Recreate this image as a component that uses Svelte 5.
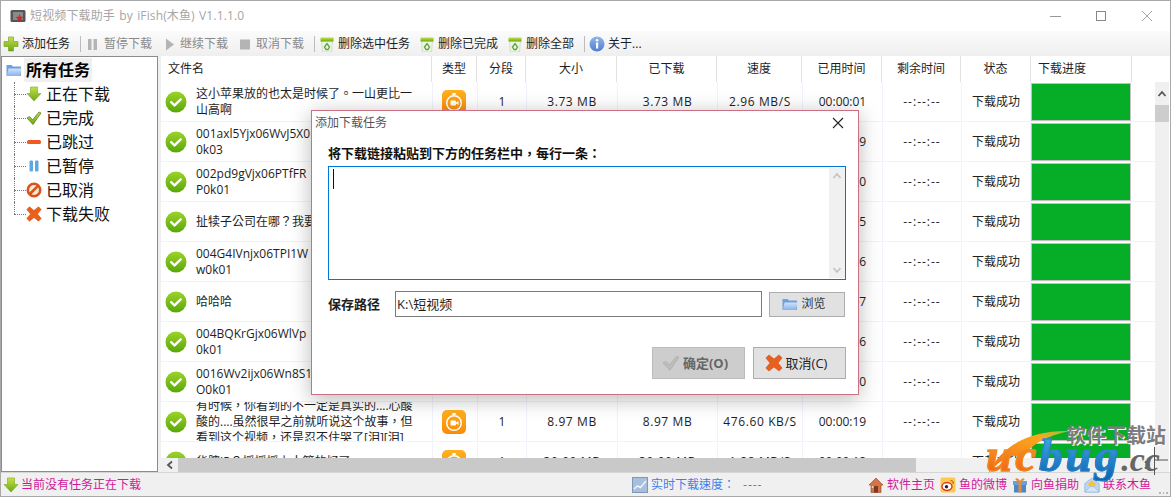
<script>
  const tree = [
    ['down', '正在下载'], ['check', '已完成'], ['dash', '已跳过'],
    ['pause2', '已暂停'], ['ban', '已取消'], ['cross', '下载失败']
  ];
  const heads = ['文件名', '类型', '分段', '大小', '已下载', '速度', '已用时间', '剩余时间', '状态', '下载进度'];
  const rows = [
    ['这小苹果放的也太是时候了。一山更比一山高啊', '3.73 MB', '2.96 MB/S', '00:00:01'],
    ['001axl5Yjx06WvJ5X0\n0k03', '5.12 MB', '580.20 KB/S', '00:00:09'],
    ['002pd9gVjx06PTfFR\nP0k01', '6.40 MB', '640.10 KB/S', '00:00:10'],
    ['扯犊子公司在哪？我要', '3.10 MB', '620.00 KB/S', '00:00:05'],
    ['004G4IVnjx06TPI1W\nw0k01', '4.02 MB', '670.33 KB/S', '00:00:06'],
    ['哈哈哈', '4.55 MB', '650.00 KB/S', '00:00:07'],
    ['004BQKrGjx06WlVp\n0k01', '3.88 MB', '646.66 KB/S', '00:00:06'],
    ['0016Wv2ijx06Wn8S1\nO0k01', '6.21 MB', '621.00 KB/S', '00:00:10'],
    ['有时候，你看到的不一定是真实的....心酸酸的....虽然很早之前就听说这个故事，但看到这个视频，还是忍不住哭了[泪][泪]', '8.97 MB', '476.60 KB/S', '00:00:19'],
    ['华腔IP？摇摇摇上人算的好了', '30.00 MB', '1.28 MB/S', '00:00:12']
  ];
  const links = [['house', '软件主页'], ['weibo', '鱼的微博'], ['gift', '向鱼捐助'], ['mail', '联系木鱼']];
</script>

{#snippet icon(name)}
  <svg class="ico" viewBox="0 0 16 16" width="16" height="16">
    {#if name === 'plus'}
      <path d="M5.5 1h5v4.5H15v5h-4.500V15h-5v-4.500H1v-5h4.500z" fill="url(#gGreen)" stroke="#6c9d12" stroke-width=".6"/>
    {:else if name === 'down'}
      <path d="M4.500 1h7v6.500H15L8 15 1 7.500h3.500z" fill="url(#gGreen)" stroke="#7aa818" stroke-width=".6"/>
    {:else if name === 'check'}
      <path d="M1 8l2.500-1.500L6.500 10 13 2l2 1-8 11.500z" fill="url(#gGreen)" stroke="#4f6b16" stroke-width=".7"/>
    {:else if name === 'dash'}
      <rect x="1" y="6" width="14" height="4" rx="1.500" fill="#ee5a22"/>
    {:else if name === 'pause2'}
      <rect x="3.500" y="2.500" width="3.500" height="11" rx="1" fill="#5aa9e0"/><rect x="9" y="2.500" width="3.500" height="11" rx="1" fill="#5aa9e0"/>
    {:else if name === 'ban'}
      <circle cx="8" cy="8" r="6.200" fill="#fbe8d8" stroke="#d9541a" stroke-width="2.600"/><path d="M3.800 12L12 3.800" stroke="#d9541a" stroke-width="2.600"/>
    {:else if name === 'cross'}
      <path d="M3.500.8L8 4.500 12.500.8l2.700 2.700L11.500 8l3.700 4.500-2.700 2.700L8 11.500l-4.500 3.700-2.700-2.700L4.500 8 .8 3.500z" fill="#e8601c" stroke="#c9480e" stroke-width=".5"/>
    {:else if name === 'folder'}
      <path d="M.5 3h5l1.500 1.500h8V14H.5z" fill="#6f9fdc"/><path d="M2.500 6.500H15.500L14 14H.8z" fill="url(#gBlue)"/>
    {:else if name === 'pauseGray'}
      <rect x="3" y="3" width="3.500" height="11" fill="#b4b4b4"/><rect x="8.500" y="3" width="3.500" height="11" fill="#b4b4b4"/>
    {:else if name === 'playGray'}
      <path d="M5 2.500l8 6-8 6z" fill="#b4b4b4"/>
    {:else if name === 'stopGray'}
      <rect x="3" y="3.500" width="10" height="10" fill="#b4b4b4"/>
    {:else if name === 'trash'}
      <path d="M2.500 5h11l-1 11h-9z" fill="#eef3e6" stroke="#b8c4a8" stroke-width=".5"/>
      <path d="M1.500 1.500h13v4h-13z" fill="url(#gGreen)"/>
      <path d="M5.500 11l2.500-3.500 2.500 3.500-1.500 2.500h-2z" fill="none" stroke="#54a83a" stroke-width="1.300"/>
    {:else if name === 'info'}
      <circle cx="8" cy="8" r="7.500" fill="url(#gBlue2)"/><rect x="7" y="6.500" width="2.200" height="6" fill="#fff"/><circle cx="8.100" cy="4.300" r="1.300" fill="#fff"/>
    {:else if name === 'house'}
      <path d="M8 1L1 8h2v7.500h10V8h2z" fill="#d8724a" stroke="#8a4426" stroke-width=".6"/><rect x="6" y="9" width="4" height="6.500" fill="#7a3c1e"/><rect x="3.800" y="9" width="1.600" height="2" fill="#f5d6a0"/>
    {:else if name === 'weibo'}
      <rect x=".5" y=".5" width="15" height="15" rx="2" fill="#fbc94c"/><ellipse cx="7" cy="9.500" rx="5" ry="3.800" fill="#fff" stroke="#d8241f" stroke-width="1.300"/><circle cx="6.500" cy="9.800" r="1.700" fill="#222"/><path d="M10.500 3.500c2 0 3 1.500 2.700 3.500" fill="none" stroke="#d8541f" stroke-width="1.200"/>
    {:else if name === 'gift'}
      <rect x="1" y="4" width="14" height="4" fill="#6aa0d8"/><rect x="2" y="8" width="12" height="7.500" fill="#4f86c4"/><rect x="6.500" y="4" width="3" height="11.500" fill="#e8893a"/><path d="M8 4C6 .5 3 1 3.500 2.500S6 4 8 4c2 0 4-.5 4.500-1.500S10 .5 8 4z" fill="#e8893a"/>
    {:else if name === 'mail'}
      <path d="M.8 6.500L8 1l7.200 5.500v8.500H.8z" fill="#bcd6f2" stroke="#7ea6d8" stroke-width=".6"/><path d="M3.500 7.500L8 3.500l4.500 4L8 10.500z" fill="#f5c33c"/><path d="M.8 15l5.500-5.500h3.400l5.500 5.500z" fill="#d6e6f8" stroke="#7ea6d8" stroke-width=".5"/>
    {:else if name === 'chart'}
      <rect x=".5" y=".5" width="15" height="15" fill="#a8bede" stroke="#8098b8"/><path d="M2 12l3.500-3 3 1.500L14 4" fill="none" stroke="#eef4fb" stroke-width="1.500"/>
    {/if}
  </svg>
{/snippet}

{#snippet okIcon()}
  <svg class="rowok" viewBox="0 0 22 22" width="22" height="22">
    <circle cx="11" cy="11" r="10.500" fill="url(#gOk)"/>
    <path d="M6.200 11.200l3.300 3.200 6.200-6" fill="none" stroke="#fff" stroke-width="2.400" stroke-linecap="round" stroke-linejoin="round"/>
  </svg>
{/snippet}

{#snippet appIcon()}
  <svg class="rowapp" viewBox="0 0 24 24" width="24" height="24">
    <rect width="24" height="24" rx="5" fill="url(#gOrange)"/>
    <circle cx="12" cy="13" r="7.300" fill="none" stroke="#fff" stroke-width="1.500"/>
    <rect x="10.300" y="3" width="3.400" height="2" fill="#fff"/>
    <rect x="8.500" y="10.500" width="5.500" height="5" rx="1" fill="#fff"/><path d="M14 12.500l2.500-1.500v4l-2.500-1.500z" fill="#fff"/>
  </svg>
{/snippet}

<svg class="defs" aria-hidden="true">
  <defs>
    <linearGradient id="gGreen" x1="0" y1="0" x2="0" y2="1"><stop offset="0" stop-color="#c4e04a"/><stop offset="1" stop-color="#6aa912"/></linearGradient>
    <linearGradient id="gBlue" x1="0" y1="0" x2="0" y2="1"><stop offset="0" stop-color="#cfe2fa"/><stop offset="1" stop-color="#8ab2ea"/></linearGradient>
    <linearGradient id="gBlue2" x1="0" y1="0" x2="0" y2="1"><stop offset="0" stop-color="#8fb6ec"/><stop offset="1" stop-color="#4f80cf"/></linearGradient>
    <linearGradient id="gOk" x1="0" y1="0" x2="0" y2="1"><stop offset="0" stop-color="#9bd42a"/><stop offset="1" stop-color="#58a806"/></linearGradient>
    <linearGradient id="gOrange" x1="0" y1="0" x2="0" y2="1"><stop offset="0" stop-color="#ffb21e"/><stop offset="1" stop-color="#fa8a08"/></linearGradient>
    <linearGradient id="gSwoosh" x1="0" y1="1" x2="1" y2="0"><stop offset="0" stop-color="#f26a1a"/><stop offset=".75" stop-color="#fba81e"/><stop offset="1" stop-color="#8cc63f"/></linearGradient>
  </defs>
</svg>

<div class="window">
  <header class="titlebar">
    <svg class="appicon" viewBox="0 0 16 16" width="16" height="16">
      <rect x=".5" y="2" width="15" height="12" rx="1.500" fill="#555"/>
      <rect x="3" y="4" width="10" height="8" fill="#8a8a8a"/>
      <path d="M9.500 6l1.200 2.700 3 .2-2.300 1.800.8 2.900-2.700-1.600-2.600 1.600.8-2.900L5.500 8.900l3-.2z" fill="#d8232a"/>
    </svg>
    <span class="apptitle">短视频下载助手 by iFish(木鱼) V1.1.1.0</span>
    <div class="winctl">
      <span class="ctl"><svg viewBox="0 0 12 12" width="12" height="12"><path d="M1 6.500h11" stroke="#999" fill="none"/></svg></span>
      <span class="ctl"><svg viewBox="0 0 12 12" width="12" height="12"><rect x="1.500" y="1.500" width="9" height="9" stroke="#888" fill="none"/></svg></span>
      <span class="ctl"><svg viewBox="0 0 12 12" width="12" height="12"><path d="M1 1l10 10M11 1L1 11" stroke="#aaa" fill="none"/></svg></span>
    </div>
  </header>

  <nav class="toolbar">
    <span class="tool">{@render icon('plus')}添加任务</span><i class="sep"></i>
    <span class="tool off">{@render icon('pauseGray')}暂停下载</span>
    <span class="tool off">{@render icon('playGray')}继续下载</span>
    <span class="tool off">{@render icon('stopGray')}取消下载</span><i class="sep"></i>
    <span class="tool">{@render icon('trash')}删除选中任务</span>
    <span class="tool">{@render icon('trash')}删除已完成</span>
    <span class="tool">{@render icon('trash')}删除全部</span><i class="sep"></i>
    <span class="tool">{@render icon('info')}关于...</span>
  </nav>

  <main class="main">
    <aside class="tree">
      <div class="root">{@render icon('folder')}<b>所有任务</b></div>
      <ul>
        {#each tree as [ic, label]}
          <li><i class="dots"></i>{@render icon(ic)}<span>{label}</span></li>
        {/each}
      </ul>
    </aside>

    <section class="table">
      <div class="thead">
        {#each heads as h, i}
          <div class="th" class:left={i === 0 || i === 9}>{h}</div>
        {/each}
      </div>
      <div class="tbodywrap">
        <div class="leftpart">
          <div class="rows">
            {#each rows as r}
              <div class="row">
                <div class="td name">{@render okIcon()}<span class="fname">{r[0]}</span></div>
                <div class="td">{@render appIcon()}</div>
                <div class="td">1</div>
                <div class="td wide">{r[1]}</div>
                <div class="td wide">{r[1]}</div>
                <div class="td wide">{r[2]}</div>
                <div class="td">{r[3]}</div>
                <div class="td dashed">--:--:--</div>
                <div class="td">下载成功</div>
                <div class="td prog"><span></span></div>
                <div class="td last"></div>
              </div>
            {/each}
          </div>
          <div class="hbar">
            <span class="arrow"><svg viewBox="0 0 10 10" width="10" height="10"><path d="M7 1.500L3 5l4 3.500" fill="none" stroke="#555" stroke-width="1.800"/></svg></span>
            <span class="hthumb"></span>
            <span class="arrow right"><svg viewBox="0 0 10 10" width="10" height="10"><path d="M3 1.500L7 5l-4 3.500" fill="none" stroke="#555" stroke-width="1.800"/></svg></span>
          </div>
        </div>
        <div class="vbar">
          <span class="varrow"><svg viewBox="0 0 10 10" width="10" height="10"><path d="M1.500 7L5 3l3.500 4" fill="none" stroke="#555" stroke-width="1.800"/></svg></span>
          <span class="vthumb"></span>
        </div>
      </div>
    </section>
  </main>

  <footer class="status">
    <span class="s-left">{@render icon('down')}<span>当前没有任务正在下载</span></span>
    <span class="s-speed">{@render icon('chart')}<span class="tc">实时下载速度：</span><span class="dashes">----</span></span>
    <span class="s-links">
      {#each links as [ic, label]}
        <span class="link">{@render icon(ic)}<span>{label}</span></span>
      {/each}
    </span>
    <span class="grip">
      <i></i><i></i><i></i>
    </span>
  </footer>

  <div class="dialog">
    <div class="d-title"><span>添加下载任务</span>
      <svg viewBox="0 0 12 12" width="12" height="12"><path d="M1 1l10 10M11 1L1 11" stroke="#222" stroke-width="1.100" fill="none"/></svg>
    </div>
    <div class="d-label tc">将下载链接粘贴到下方的任务栏中，每行一条：</div>
    <div class="d-area">
      <i class="caret"></i>
      <div class="d-scroll">
        <svg viewBox="0 0 10 10" width="10" height="10"><path d="M1.500 7L5 3l3.500 4" fill="none" stroke="#c4c4c4" stroke-width="1.800"/></svg>
        <svg viewBox="0 0 10 10" width="10" height="10"><path d="M1.500 3L5 7l3.500-4" fill="none" stroke="#c4c4c4" stroke-width="1.800"/></svg>
      </div>
    </div>
    <div class="d-path">
      <b>保存路径</b>
      <div class="d-input">K:\短视频</div>
      <div class="d-browse">{@render icon('folder')}浏览</div>
    </div>
    <div class="d-actions">
      <div class="btn disabled">
        <svg class="ico" viewBox="0 0 16 16" width="18" height="18"><path d="M1 8l2.500-1.500L6.500 10 13 2l2 1-8 11.500z" fill="#bdbdbd" stroke="#a8a8a8" stroke-width=".6"/></svg>
        确定(O)
      </div>
      <div class="btn">
        <svg class="ico" viewBox="0 0 16 16" width="18" height="18"><path d="M3.500.8L8 4.500 12.500.8l2.700 2.700L11.500 8l3.700 4.500-2.700 2.700L8 11.500l-4.500 3.700-2.700-2.700L4.500 8 .8 3.500z" fill="#e8601c" stroke="#c9480e" stroke-width=".5"/></svg>
        取消(C)
      </div>
    </div>
  </div>

  <div class="mark" aria-label="ucbug.cc 软件下载站">
    <svg class="swoosh" viewBox="0 0 90 60" width="90" height="60">
      <path d="M0 46C14 16 44 2 82 3 58 8 44 16 34 30 28 24 12 30 0 46z" fill="url(#gSwoosh)"/>
    </svg>
    <span class="m-cn tc">软件下载站</span>
    <span class="m-logo"><span class="m-uc">uc</span><span class="m-bug">bug</span><span class="m-cc">.cc</span></span>
    <svg class="m-stray" viewBox="0 0 16 28" width="16" height="28"><path d="M.5 0v28M1 13h13" stroke="#555" fill="none"/></svg>
  </div>
</div>

<style>
  :global(body) { margin: 0; background: #f0f0f0; }
  * { box-sizing: border-box; }
  .defs { position: absolute; width: 0; height: 0; }
  .window {
    position: relative;
    width: 1171px; height: 497px;
    display: flex; flex-direction: column;
    border: 1px solid #a9a9a9;
    background: #f0f0f0;
    overflow: hidden;
    font: 12px/16px "Open Sans", "Noto Sans CJK SC", sans-serif;
    color: #1e1e1e;
  }
  .tc { font-family: "Open Sans", "Noto Sans CJK TC", sans-serif; }
  .ico { flex: none; display: block; }

  .titlebar { height: 30px; flex: none; background: #fff; display: flex; align-items: center; padding-left: 9px; }
  .appicon { margin-right: 4px; }
  .apptitle { color: #a6a6a6; white-space: nowrap; letter-spacing: .14px; word-spacing: 1px; }
  .winctl { margin-left: auto; display: flex; }
  .ctl { width: 46px; height: 30px; display: flex; align-items: center; justify-content: center; margin-top: -1px; }

  .toolbar {
    height: 25px; flex: none; display: flex; align-items: center; padding-left: 2px;
    background: linear-gradient(#fbfbfb, #efefef);
  }
  .tool { display: flex; align-items: center; gap: 3px; margin-right: 9px; white-space: nowrap; }
  .tool.off { color: #8a8a8a; }
  .sep { width: 1px; height: 16px; background: #bcbcbc; margin: 0 4px 0 1px; flex: none; }

  .main { flex: 1; min-height: 0; display: flex; }
  .tree { width: 157px; flex: none; background: #fff; border: 1px solid #8c8c8c; padding: 1px 0 0 0; }
  .root { display: flex; align-items: center; height: 24px; padding-left: 4px; gap: 2px; }
  .root b { background: #f0f0f0; padding: 0 2px; font-size: 16px; line-height: 24px; color: #000; font-weight: 700; }
  .tree ul { list-style: none; margin: 0; padding: 0 0 0 12px; }
  .tree li { position: relative; height: 24px; display: flex; align-items: center; font-size: 16px; color: #111; }
  .tree li::before { content: ""; position: absolute; left: 0; top: 0; height: 100%; border-left: 1px dotted #777; }
  .tree li:last-child::before { height: 50%; }
  .dots { width: 12px; border-top: 1px dotted #777; flex: none; }
  .tree li span { margin-left: 4px; white-space: nowrap; }

  .table { margin-left: 3px; width: 1009px; flex: none; display: flex; flex-direction: column; background: #fff; }
  .thead { height: 26px; flex: none; display: grid; grid-template-columns: 271px 45px 49px 91px 100px 85px 80px 79px 70px 101px 1fr; background: #fff; }
  .th { display: flex; align-items: center; justify-content: center; border-right: 1px solid #e2e2e2; }
  .th.left { justify-content: flex-start; padding-left: 7px; }
  .tbodywrap { flex: 1; min-height: 0; display: flex; }
  .leftpart { width: 994px; flex: none; display: flex; flex-direction: column; }
  .rows { flex: 1; min-height: 0; overflow: hidden; }
  .row { height: 40px; display: grid; grid-template-columns: 272px 45px 49px 91px 100px 85px 80px 79px 69px 100px 1fr; border-bottom: 1px solid #f0f3fb; }
  .td { display: flex; align-items: center; justify-content: center; border-right: 1px solid #f0f3fb; white-space: nowrap; overflow: hidden; min-width: 0; }
  .td.last { border-right: none; }
  .td.wide { letter-spacing: .6px; }
  .td.dashed { letter-spacing: 1px; }
  .name { justify-content: flex-start; padding-left: 4px; }
  .rowok { flex: none; margin-right: 9px; }
  .rowapp { margin-right: 3px; flex: none; }
  .fname { white-space: pre-line; width: 222px; flex: none; word-break: break-all; font-family: "Open Sans", "Noto Sans CJK TC", sans-serif; }
  .prog { padding: 1px 0 0; border: none; align-items: stretch; justify-content: stretch; }
  .prog span { flex: 1; background: #06ae28; border: 1px solid #c2c2c2; }
  .hbar { height: 14px; flex: none; background: #f0f0f0; display: flex; align-items: center; }
  .arrow { width: 17px; height: 14px; display: flex; align-items: center; justify-content: center; flex: none; }
  .arrow.right { margin-left: auto; }
  .hthumb { width: 738px; height: 14px; background: #c9c9c9; flex: none; }
  .vbar { width: 14px; flex: none; background: #f0f0f0; display: flex; flex-direction: column; }
  .varrow { height: 23px; display: flex; align-items: center; justify-content: center; }
  .vthumb { height: 17px; background: #cdcdcd; }

  .status { height: 24px; flex: none; display: flex; align-items: center; border-top: 1px solid #d6d6d6; padding-left: 2px; position: relative; }
  .s-left { display: flex; align-items: center; gap: 2px; color: #d0189b; width: 629px; }
  .s-speed { display: flex; align-items: center; gap: 3px; color: #3f80e8; width: 236px; }
  .dashes { margin-left: 5px; letter-spacing: 1px; }
  .s-links { display: flex; gap: 5px; color: #d0189b; }
  .link { display: flex; align-items: center; gap: 3px; white-space: nowrap; }
  .grip { margin-left: 8px; width: 9px; height: 9px; display: flex; gap: 2px; align-items: flex-end; align-self: flex-end; margin-bottom: 2px; }
  .grip i { width: 2px; height: 2px; background: #b5b5b5; }

  .dialog {
    position: absolute; left: 310px; top: 109px; width: 548px; height: 285px;
    background: #fff; border: 1px solid #cc6f82;
    box-shadow: 0 4px 20px rgba(0,0,0,.28);
    padding: 0 12px 0 16px;
    display: flex; flex-direction: column;
  }
  .d-title { height: 22px; margin: 1px 0 0 -13px; display: flex; align-items: center; justify-content: space-between; color: #555; padding-right: 2px; }
  .d-label { margin-top: 10px; height: 18px; font-size: 13px; font-weight: 700; line-height: 18px; color: #111; white-space: nowrap; }
  .d-area { margin-top: 4px; height: 114px; border: 1px solid #0078d7; position: relative; flex: none; }
  .caret { position: absolute; left: 4px; top: 2px; width: 1px; height: 20px; background: #111; }
  .d-scroll { position: absolute; right: 0; top: 1px; bottom: 1px; width: 16px; background: #f0f0f0; display: flex; flex-direction: column; justify-content: space-between; align-items: center; padding: 3px 0; }
  .d-path { display: flex; align-items: center; margin-top: 11px; height: 26px; flex: none; }
  .d-path b { font-size: 13px; width: 67px; flex: none; }
  .d-input { width: 367px; height: 26px; flex: none; border: 1px solid #7a7a7a; padding-left: 1px; font-size: 13px; line-height: 24px; }
  .d-browse { margin-left: 7px; width: 76px; height: 25px; flex: none; background: #e1e1e1; border: 1px solid #adadad; display: flex; align-items: center; justify-content: center; gap: 3px; color: #333; padding-right: 6px; }
  .d-actions { display: flex; justify-content: flex-end; gap: 8px; margin-top: 30px; flex: none; }
  .btn { width: 93px; height: 32px; background: #e1e1e1; border: 1px solid #adadad; display: flex; align-items: center; justify-content: center; gap: 3px; font-size: 13px; color: #222; padding-right: 7px; }
  .btn.disabled { background: #cdcdcd; border-color: #bcbcbc; color: #666; font-weight: 700; }

  .mark { position: absolute; left: 985px; top: 425px; width: 186px; height: 62px; pointer-events: none; }
  .swoosh { position: absolute; left: 2px; top: 2px; }
  .m-cn { position: absolute; left: 80px; top: 0; font-size: 20px; line-height: 20px; font-weight: 700; color: #7d7d7d; text-shadow: 1px 1px 0 #fff; white-space: nowrap; }
  .m-logo { position: absolute; left: 0; top: 1px; font: italic 700 47px/56px "Liberation Serif", serif; white-space: nowrap; letter-spacing: 3px; }
  .m-uc, .m-bug { -webkit-background-clip: text; background-clip: text; color: transparent; }
  .m-uc { background-image: linear-gradient(#fba81e, #ee5a1a); -webkit-text-stroke: 1px #f28a1e; }
  .m-bug { background-image: linear-gradient(#49b3ea, #0a62b0); -webkit-text-stroke: 1px #2a80c8; }
  .m-cc { color: #666; font-size: 34px; letter-spacing: 0; }
  .m-stray { position: absolute; left: 168px; top: 21px; }
</style>
